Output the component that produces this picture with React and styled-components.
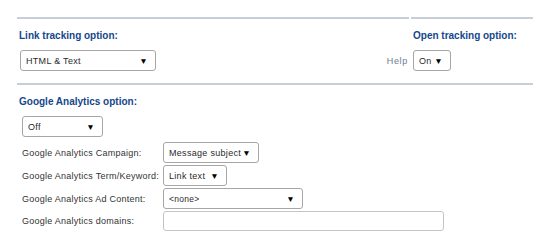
import React from "react";
import styled, { createGlobalStyle } from "styled-components";

const GlobalStyle = createGlobalStyle`
  body {
    margin: 0;
    background: #fff;
    font-family: "Liberation Sans", Arial, sans-serif;
  }
`;

const Page = styled.div`
  width: 556px;
  height: 251px;
  padding: 17px 23px 0 17px;
  box-sizing: border-box;
`;

const TopRow = styled.div`
  display: flex;
  gap: 2px;
`;

const Column = styled.div`
  box-sizing: border-box;
  flex: ${(p) => (p.grow ? 1 : "none")};
  width: ${(p) => (p.w ? p.w + "px" : "auto")};
  border-top: 2px solid #c6ceda;
  padding: 0 0 11px ${(p) => (p.pad || 0)}px;
`;

const Title = styled.div`
  color: #14478c;
  font-size: 10px;
  font-weight: bold;
  line-height: 12px;
  margin: 11px 0 8px;
`;

const Line = styled.div`
  display: flex;
  align-items: center;
  justify-content: ${(p) => p.justify || "flex-start"};
`;

const Select = styled.div`
  box-sizing: border-box;
  width: ${(p) => p.w}px;
  height: 21px;
  border: 1px solid #a6a6a6;
  border-radius: 3px;
  background: #fff;
  display: flex;
  align-items: center;
  justify-content: space-between;
  padding: 0 7px 0 ${(p) => (p.padLeft || 5)}px;
  font-size: ${(p) => (p.small ? 8.5 : 9)}px;
  letter-spacing: 0.3px;
  white-space: nowrap;
  color: #2a2a2a;

  &::after {
    content: "▼";
    font-size: 8.5px;
    color: #000;
  }
`;

const Help = styled.span`
  font-size: 9px;
  color: #6b7d94;
  letter-spacing: 0.7px;
  margin-right: 1px;
`;

const Section = styled.div`
  border-top: 2px solid #c6ceda;
  margin-top: 1px;
  padding-left: 2px;
`;

const Grid = styled.div`
  display: grid;
  grid-template-columns: 141px auto;
  row-gap: 2px;
  padding-left: 3px;
  align-items: center;
`;

const Label = styled.div`
  font-size: 9px;
  letter-spacing: 0.25px;
  color: #333;
`;

const Cell = styled.div`
  display: flex;
`;

const TextField = styled.div`
  box-sizing: border-box;
  width: 281px;
  height: 20px;
  border: 1px solid #c4c4c4;
  border-radius: 3px;
`;

export default function App() {
  return (
    <>
      <GlobalStyle />
      <Page>
        <TopRow>
          <Column grow>
            <Title style={{ marginLeft: 2 }}>Link tracking option:</Title>
            <Line justify="space-between">
              <Select w={136} style={{ marginLeft: 3 }}>HTML &amp; Text</Select>
              <Help>Help</Help>
            </Line>
          </Column>
          <Column w={122} pad={2}>
            <Title>Open tracking option:</Title>
            <Select w={38} padLeft={5}>On</Select>
          </Column>
        </TopRow>
        <Section>
          <Title style={{ marginLeft: 0, marginTop: 11 }}>Google Analytics option:</Title>
          <Grid>
            <Cell style={{ gridColumn: "1 / span 2", marginBottom: 3 }}>
              <Select w={81}>Off</Select>
            </Cell>
            <Label>Google Analytics Campaign:</Label>
            <Cell><Select w={96}>Message subject</Select></Cell>
            <Label>Google Analytics Term/Keyword:</Label>
            <Cell><Select w={64}>Link text</Select></Cell>
            <Label>Google Analytics Ad Content:</Label>
            <Cell><Select w={140} small>&lt;none&gt;</Select></Cell>
            <Label>Google Analytics domains:</Label>
            <Cell><TextField /></Cell>
          </Grid>
        </Section>
      </Page>
    </>
  );
}
